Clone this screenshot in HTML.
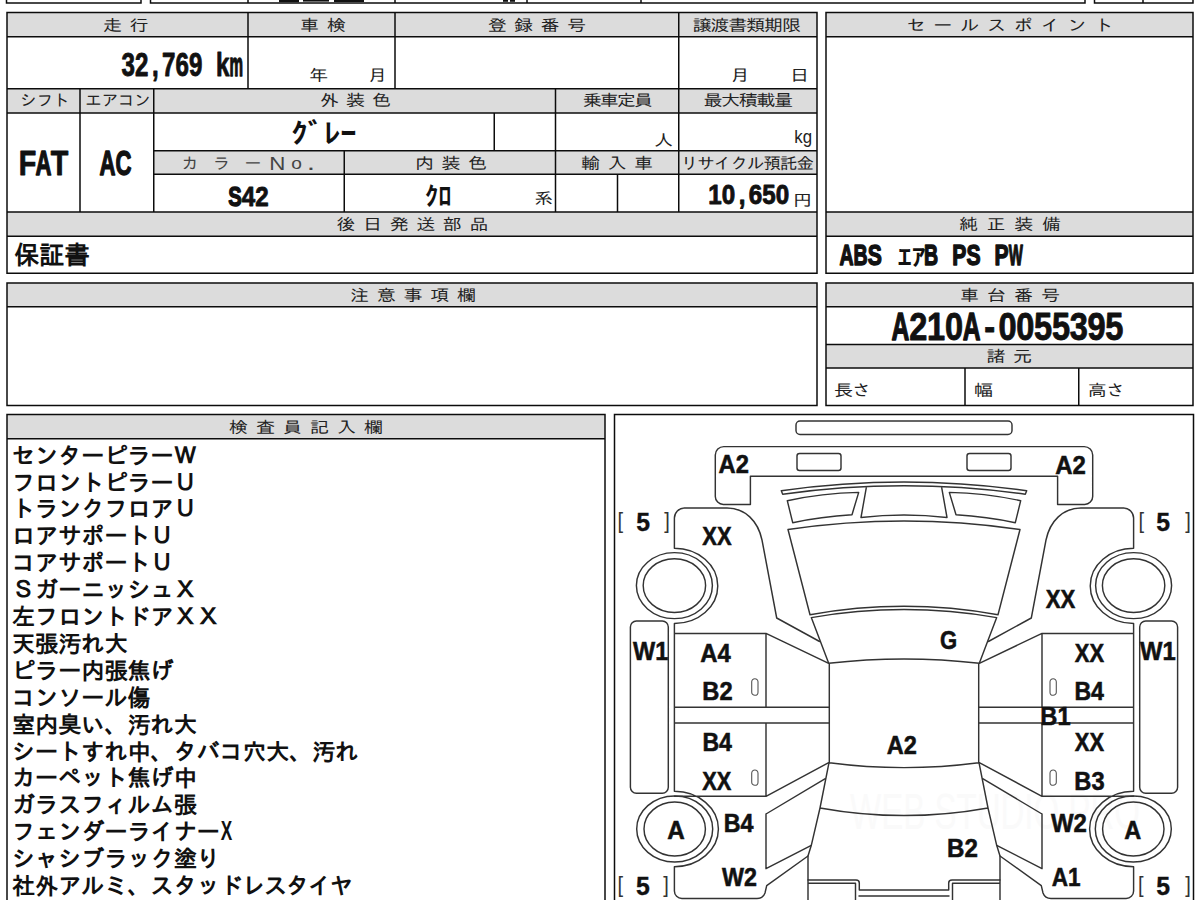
<!DOCTYPE html>
<html lang="ja"><head><meta charset="utf-8"><title>出品票</title>
<style>
html,body{margin:0;padding:0;background:#fff;}
body{width:1200px;height:900px;overflow:hidden;position:relative;font-family:"Liberation Sans","IPAGothic","Noto Sans CJK JP",sans-serif;}
svg{position:absolute;left:0;top:0;display:block}
text{white-space:pre}
</style></head><body>
<svg width="1200" height="900" viewBox="0 0 1200 900">
<g id="fills">
<rect x="7.0" y="12.5" width="810.0" height="24.25" fill="#dcdcdc"/>
<rect x="7.0" y="88.75" width="810.0" height="24.25" fill="#dcdcdc"/>
<rect x="153.75" y="150.75" width="663.25" height="23.5" fill="#dcdcdc"/>
<rect x="7.0" y="212.0" width="810.0" height="24.25" fill="#dcdcdc"/>
<rect x="826.0" y="12.5" width="367.0" height="24.25" fill="#dcdcdc"/>
<rect x="826.0" y="212.0" width="367.0" height="24.25" fill="#dcdcdc"/>
<rect x="7.0" y="283.0" width="810.0" height="23.75" fill="#dcdcdc"/>
<rect x="826.0" y="283.0" width="367.0" height="23.75" fill="#dcdcdc"/>
<rect x="826.0" y="344.5" width="367.0" height="23.5" fill="#dcdcdc"/>
<rect x="7.0" y="414.5" width="598.0" height="24.25" fill="#dcdcdc"/>
</g>
<g id="grid" fill="none" stroke="#0c0c0c" stroke-width="1.5">
<path d="M5.75,3H141.75 M6.5,-2V3 M141,-2V3 M149.75,3H1085.75 M150.5,-2V3 M1085,-2V3 M248,-2V3 M395,-2V3 M527,-2V3 M641,-2V3 M1093.75,3H1193.75 M1094.5,-2V3 M1193,-2V3 M1143,-2V3 M6.25,12.5H817.75 M6.25,36.75H817.75 M6.25,88.75H817.75 M6.25,113.0H817.75 M6.25,212.0H817.75 M6.25,236.25H817.75 M6.25,273.25H817.75 M153.00,150.75H817.75 M153.00,174.25H817.75 M7.0,12.5V273.25 M817.0,12.5V273.25 M248,12.5V88.75 M395,12.5V88.75 M678.75,12.5V212.0 M80,88.75V212.0 M153.75,88.75V212.0 M555.5,88.75V212.0 M494.25,113.0V150.75 M344.25,150.75V212.0 M617.5,174.25V212.0 M825.25,12.5H1193.75 M825.25,36.75H1193.75 M825.25,212.0H1193.75 M825.25,236.25H1193.75 M825.25,273.25H1193.75 M826.0,12.5V273.25 M1193.0,12.5V273.25 M825.25,283.0H1193.75 M825.25,306.75H1193.75 M825.25,344.5H1193.75 M825.25,368.0H1193.75 M825.25,405.5H1193.75 M826.0,283.0V405.5 M1193.0,283.0V405.5 M965,368.0V405.5 M1078.75,368.0V405.5 M6.25,283.0H817.75 M6.25,306.75H817.75 M6.25,405.5H817.75 M7.0,283.0V405.5 M817.0,283.0V405.5 M6.25,414.5H605.75 M6.25,438.75H605.75 M7.0,414.5V905 M605,414.5V905 M613.75,414.5H1194.25 M614.5,414.5V905 M1193.5,414.5V905"/>
</g>
<g id="topcut" fill="#111">
<rect x="279" y="0" width="20" height="2.2"/><rect x="303" y="0" width="26" height="1.6"/><rect x="334" y="0" width="30" height="2"/>
<rect x="503" y="0" width="5" height="1.8"/><rect x="510" y="0" width="5" height="1.8"/><rect x="1100" y="0" width="0" height="0"/>
</g>
<text x="850" y="829" font-family="'Liberation Sans',sans-serif" font-size="50" fill="#fafafa" textLength="290" lengthAdjust="spacingAndGlyphs">WEB STUDIO PRO</text>
<g id="diagram">
<g fill="none" stroke="#333" stroke-width="1.45" stroke-linejoin="round" stroke-linecap="round">
<path d="M800,421H1008A4,4 0 0 1 1012,425V430.5A4,4 0 0 1 1008,434.5H800A4,4 0 0 1 796,430.5V425A4,4 0 0 1 800,421Z M723.8,446.6H1084.2A8.5,8.5 0 0 1 1092.7,455.1V496.4A8,8 0 0 1 1084.7,504.4H1057.6V476.3H750.4V504.4H723.3A8,8 0 0 1 715.3,496.4V455.1A8.5,8.5 0 0 1 723.8,446.6Z M781.3,490.7 Q904.00,473.30 1026.70,490.70 L1025.3,494.2 Q904.00,477.40 782.70,494.20 Z M866.3,487.6 L861,517.5 Q904.00,512.50 947.00,517.50 L941.7,487.6 M788,529.5 Q904.00,512.50 1020.00,529.50 L998,614.7 Q904.00,597.90 810.00,614.70 Z M811.3,617.6 Q904.00,601.60 996.70,617.60 L979.3,663.3 Q904.00,654.70 828.70,663.30 Z M829.3,663.3 V762.7 Q904.00,772.50 978.70,762.70 V663.3 M829.0,762.7 L820,808 Q904.00,823.20 988.00,808.00 L979.0,762.7 M820,808 L811.3,845.3 L808,856 V880 H856 Q859.3,880 859.3,883 V890 H948.7 V883 Q948.7,880 952,880 H1000 V856 L996.7,845.3 L988,808 M859,896 H949"/>
<g><path d="M799.5,453.5H838.5A2.5,2.5 0 0 1 841,456V468A2.5,2.5 0 0 1 838.5,470.5H799.5A2.5,2.5 0 0 1 797,468V456A2.5,2.5 0 0 1 799.5,453.5Z M787.3,500.7 Q822,493.2 858.7,492.4 L852,514.7 Q821,516.5 792.7,522.7 Z M808,883.3 H855.5 V905 M808,880 V905 M674.4,548.3 V518 A10,10 0 0 1 684.4,508 H727 C745,508 758,521 762,540 L776.7,618 L819.6,641.5 M674.4,633.4 H766 L828.7,663.3 M674.4,623.5 V791.3 M766,633.4 V707.2 M766,723 V796.3 M674.4,707.2 H829.3 M674.4,723 H829.3 M674.4,796.3 H766 L828.7,762.7 M766,814 L825.3,778.7 M811.3,845.3 L766,868.7 V814 M674.4,866.7 V891 A7.5,7.5 0 0 0 681.9,898.5 H757 Q763,898.5 765,893 L766.7,885.6 L808,856 M674.4,548.3 A43.4,37.6 0 0 1 674.4,623.5 M674.4,791.3 A44,37.7 0 0 1 674.4,866.7 M636.4,621 H662.3 A6,6 0 0 1 668.3,627 V787.3 A6,6 0 0 1 662.3,793.3 H636.4 A6,6 0 0 1 630.4,787.3 V627 A6,6 0 0 1 636.4,621 Z"/><path stroke="#555" stroke-width="1.1" d="M754.85,678.7 A3.15,3.15 0 0 1 758,681.85 V692.15 A3.15,3.15 0 0 1 751.7,692.15 V681.85 A3.15,3.15 0 0 1 754.85,678.7 Z M754.85,770 A3.15,3.15 0 0 1 758,773.15 V782.15 A3.15,3.15 0 0 1 751.7,782.15 V773.15 A3.15,3.15 0 0 1 754.85,770 Z"/><ellipse cx="674.4" cy="585.6" rx="38" ry="33"/><ellipse cx="674.4" cy="585.6" rx="31.2" ry="26.9"/><ellipse cx="674.7" cy="829" rx="38" ry="33"/><ellipse cx="674.7" cy="829" rx="30.7" ry="27"/></g>
<g transform="translate(1808.0,0) scale(-1,1)"><path d="M799.5,453.5H838.5A2.5,2.5 0 0 1 841,456V468A2.5,2.5 0 0 1 838.5,470.5H799.5A2.5,2.5 0 0 1 797,468V456A2.5,2.5 0 0 1 799.5,453.5Z M787.3,500.7 Q822,493.2 858.7,492.4 L852,514.7 Q821,516.5 792.7,522.7 Z M808,883.3 H855.5 V905 M808,880 V905 M674.4,548.3 V518 A10,10 0 0 1 684.4,508 H727 C745,508 758,521 762,540 L776.7,618 L819.6,641.5 M674.4,633.4 H766 L828.7,663.3 M674.4,623.5 V791.3 M766,633.4 V707.2 M766,723 V796.3 M674.4,707.2 H829.3 M674.4,723 H829.3 M674.4,796.3 H766 L828.7,762.7 M766,814 L825.3,778.7 M811.3,845.3 L766,868.7 V814 M674.4,866.7 V891 A7.5,7.5 0 0 0 681.9,898.5 H757 Q763,898.5 765,893 L766.7,885.6 L808,856 M674.4,548.3 A43.4,37.6 0 0 1 674.4,623.5 M674.4,791.3 A44,37.7 0 0 1 674.4,866.7 M636.4,621 H662.3 A6,6 0 0 1 668.3,627 V787.3 A6,6 0 0 1 662.3,793.3 H636.4 A6,6 0 0 1 630.4,787.3 V627 A6,6 0 0 1 636.4,621 Z"/><path stroke="#555" stroke-width="1.1" d="M754.85,678.7 A3.15,3.15 0 0 1 758,681.85 V692.15 A3.15,3.15 0 0 1 751.7,692.15 V681.85 A3.15,3.15 0 0 1 754.85,678.7 Z M754.85,770 A3.15,3.15 0 0 1 758,773.15 V782.15 A3.15,3.15 0 0 1 751.7,782.15 V773.15 A3.15,3.15 0 0 1 754.85,770 Z"/><ellipse cx="674.4" cy="585.6" rx="38" ry="33"/><ellipse cx="674.4" cy="585.6" rx="31.2" ry="26.9"/><ellipse cx="674.7" cy="829" rx="38" ry="33"/><ellipse cx="674.7" cy="829" rx="30.7" ry="27"/></g>
</g>
</g>
<g id="texts">
<text transform="translate(0,30.60) scale(1.1938,1)" x="86.24 108.43" font-family="'Liberation Sans', 'IPAGothic', 'Noto Sans CJK JP', sans-serif" font-weight="400" font-size="16.0" fill="#222">走行</text>
<text transform="translate(0,30.60) scale(1.1938,1)" x="251.25 273.87" font-family="'Liberation Sans', 'IPAGothic', 'Noto Sans CJK JP', sans-serif" font-weight="400" font-size="16.0" fill="#222">車検</text>
<text transform="translate(0,30.60) scale(1.1938,1)" x="408.52 430.65 452.78 474.90" font-family="'Liberation Sans', 'IPAGothic', 'Noto Sans CJK JP', sans-serif" font-weight="400" font-size="16.0" fill="#222">登録番号</text>
<text transform="translate(0,30.60) scale(1.1938,1)" x="580.24 595.19 610.14 625.09 640.05 655.00" font-family="'Liberation Sans', 'IPAGothic', 'Noto Sans CJK JP', sans-serif" font-weight="400" font-size="16.0" fill="#222">譲渡書類期限</text>
<text transform="translate(0,30.60) scale(1.1938,1)" x="759.28 781.78 804.28 826.78 849.27 871.77 894.27 916.76" font-family="'Liberation Sans', 'IPAGothic', 'Noto Sans CJK JP', sans-serif" font-weight="400" font-size="16.0" fill="#222">セールスポイント</text>
<text transform="translate(0,106.40) scale(1.0534,1)" x="19.06 34.72 50.38" font-family="'Liberation Sans', 'IPAGothic', 'Noto Sans CJK JP', sans-serif" font-weight="400" font-size="16.0" fill="#222">シフト</text>
<text transform="translate(0,106.40) scale(1.0534,1)" x="80.76 96.27 111.77 127.28" font-family="'Liberation Sans', 'IPAGothic', 'Noto Sans CJK JP', sans-serif" font-weight="400" font-size="16.0" fill="#222">エアコン</text>
<text transform="translate(0,106.40) scale(1.1938,1)" x="268.00 289.78 311.56" font-family="'Liberation Sans', 'IPAGothic', 'Noto Sans CJK JP', sans-serif" font-weight="400" font-size="16.0" fill="#222">外装色</text>
<text transform="translate(0,106.40) scale(1.1938,1)" x="488.10 502.41 516.72 531.03" font-family="'Liberation Sans', 'IPAGothic', 'Noto Sans CJK JP', sans-serif" font-weight="400" font-size="16.0" fill="#222">乗車定員</text>
<text transform="translate(0,106.40) scale(1.1938,1)" x="589.24 604.01 618.77 633.53 648.30" font-family="'Liberation Sans', 'IPAGothic', 'Noto Sans CJK JP', sans-serif" font-weight="400" font-size="16.0" fill="#222">最大積載量</text>
<text transform="translate(0,168.50) scale(1.0534,1)" x="172.37 202.28 232.18" font-family="'Liberation Sans', 'IPAGothic', 'Noto Sans CJK JP', sans-serif" font-weight="400" font-size="16.0" fill="#444">カラー</text>
<text transform="translate(0,168.50) scale(1.1938,1)" x="347.58 369.78 391.98" font-family="'Liberation Sans', 'IPAGothic', 'Noto Sans CJK JP', sans-serif" font-weight="400" font-size="16.0" fill="#222">内装色</text>
<text transform="translate(0,168.50) scale(1.1938,1)" x="486.63 508.83 531.03" font-family="'Liberation Sans', 'IPAGothic', 'Noto Sans CJK JP', sans-serif" font-weight="400" font-size="16.0" fill="#222">輸入車</text>
<text transform="translate(0,168.50) scale(1.0885,1)" x="625.45 640.64 655.83 671.02 686.22 701.41 716.60 731.79" font-family="'Liberation Sans', 'IPAGothic', 'Noto Sans CJK JP', sans-serif" font-weight="400" font-size="16.0" fill="#222">リサイクル預託金</text>
<text transform="translate(0,230.00) scale(1.1938,1)" x="281.83 304.11 326.39 348.67 370.95 393.23" font-family="'Liberation Sans', 'IPAGothic', 'Noto Sans CJK JP', sans-serif" font-weight="400" font-size="16.0" fill="#222">後日発送部品</text>
<text transform="translate(0,301.00) scale(1.1938,1)" x="293.13 315.54 337.95 360.36 382.76" font-family="'Liberation Sans', 'IPAGothic', 'Noto Sans CJK JP', sans-serif" font-weight="400" font-size="16.0" fill="#222">注意事項欄</text>
<text transform="translate(0,432.50) scale(1.1938,1)" x="191.78 214.40 237.01 259.63 282.24 304.86" font-family="'Liberation Sans', 'IPAGothic', 'Noto Sans CJK JP', sans-serif" font-weight="400" font-size="16.0" fill="#222">検査員記入欄</text>
<text transform="translate(0,230.00) scale(1.1938,1)" x="803.26 826.44 849.61 872.79" font-family="'Liberation Sans', 'IPAGothic', 'Noto Sans CJK JP', sans-serif" font-weight="400" font-size="16.0" fill="#222">純正装備</text>
<text transform="translate(0,301.00) scale(1.1938,1)" x="804.10 826.72 849.33 871.95" font-family="'Liberation Sans', 'IPAGothic', 'Noto Sans CJK JP', sans-serif" font-weight="400" font-size="16.0" fill="#222">車台番号</text>
<text transform="translate(0,362.00) scale(1.1938,1)" x="826.30 848.49" font-family="'Liberation Sans', 'IPAGothic', 'Noto Sans CJK JP', sans-serif" font-weight="400" font-size="16.0" fill="#222">諸元</text>
<text transform="translate(0,396.00) scale(1.1938,1)" x="698.56 713.63" font-family="'Liberation Sans', 'IPAGothic', 'Noto Sans CJK JP', sans-serif" font-weight="400" font-size="16.0" fill="#222">長さ</text>
<text transform="translate(0,396.00) scale(1.1938,1)" x="815.83" font-family="'Liberation Sans', 'IPAGothic', 'Noto Sans CJK JP', sans-serif" font-weight="400" font-size="16.0" fill="#222">幅</text>
<text transform="translate(0,396.00) scale(1.1938,1)" x="911.11 926.40" font-family="'Liberation Sans', 'IPAGothic', 'Noto Sans CJK JP', sans-serif" font-weight="400" font-size="16.0" fill="#222">高さ</text>
<text transform="translate(0,80.50) scale(1.1938,1)" x="258.79" font-family="'Liberation Sans', 'IPAGothic', 'Noto Sans CJK JP', sans-serif" font-weight="400" font-size="16.0" fill="#222">年</text>
<text transform="translate(0,80.50) scale(1.1938,1)" x="308.21" font-family="'Liberation Sans', 'IPAGothic', 'Noto Sans CJK JP', sans-serif" font-weight="400" font-size="16.0" fill="#222">月</text>
<text transform="translate(0,80.50) scale(1.1938,1)" x="611.86" font-family="'Liberation Sans', 'IPAGothic', 'Noto Sans CJK JP', sans-serif" font-weight="400" font-size="16.0" fill="#222">月</text>
<text transform="translate(0,80.50) scale(1.1938,1)" x="661.70" font-family="'Liberation Sans', 'IPAGothic', 'Noto Sans CJK JP', sans-serif" font-weight="400" font-size="16.0" fill="#222">日</text>
<text transform="translate(0,145.50) scale(1.1938,1)" x="547.78" font-family="'Liberation Sans', 'IPAGothic', 'Noto Sans CJK JP', sans-serif" font-weight="400" font-size="16.0" fill="#222">人</text>
<text transform="translate(0,204.00) scale(1.1938,1)" x="447.26" font-family="'Liberation Sans', 'IPAGothic', 'Noto Sans CJK JP', sans-serif" font-weight="400" font-size="16.0" fill="#222">系</text>
<text transform="translate(0,205.50) scale(1.1938,1)" x="664.21" font-family="'Liberation Sans', 'IPAGothic', 'Noto Sans CJK JP', sans-serif" font-weight="400" font-size="16.0" fill="#222">円</text>
<text transform="translate(269.21,169.50) scale(1.1848,1)" font-family="'Liberation Sans', 'IPAGothic', 'Noto Sans CJK JP', sans-serif" font-weight="400" font-size="18.84" fill="#444" >N</text>
<text transform="translate(291.23,169.34) scale(1.1702,1)" font-family="'Liberation Sans', 'IPAGothic', 'Noto Sans CJK JP', sans-serif" font-weight="400" font-size="16.36" fill="#444" >o</text>
<text transform="translate(306.80,169.50) scale(1.3200,1)" font-family="'Liberation Sans', 'IPAGothic', 'Noto Sans CJK JP', sans-serif" font-weight="400" font-size="22.73" fill="#444" >.</text>
<text transform="translate(794.32,143.48) scale(0.8798,1)" font-family="'Liberation Sans', sans-serif" font-weight="400" font-size="19.15" fill="#222" >kg</text>
<text transform="translate(0,75.92) scale(0.7213,1)" x="168.50 187.22 210.59 224.65 243.37 262.09 285.46 299.52" font-family="'Liberation Sans', sans-serif" font-weight="700" font-size="33.45" fill="#111" stroke="#111" stroke-width="0.9" stroke-linejoin="round">32,769 k</text>
<text transform="translate(229.50,75.92) scale(0.4539,1)" font-family="'Liberation Sans', sans-serif" font-weight="700" font-size="33.45" fill="#111" stroke="#111" stroke-width="1.44" stroke-linejoin="round">m</text>
<text transform="translate(0,174.65) scale(0.8324,1)" x="22.50 47.47 60.94" font-family="'Liberation Sans', sans-serif" font-weight="700" font-size="34.51" fill="#111" stroke="#111" stroke-width="0.9" stroke-linejoin="round">F T</text>
<text transform="translate(35.50,174.65) scale(0.6421,1)" font-family="'Liberation Sans', sans-serif" font-weight="700" font-size="34.51" fill="#111" stroke="#111" stroke-width="1.44" stroke-linejoin="round">A</text>
<text transform="translate(99.50,174.65) scale(0.6421,1)" font-family="'Liberation Sans', sans-serif" font-weight="700" font-size="34.51" fill="#111" stroke="#111" stroke-width="1.44" stroke-linejoin="round">A</text>
<text transform="translate(115.50,174.65) scale(0.6421,1)" font-family="'Liberation Sans', sans-serif" font-weight="700" font-size="34.51" fill="#111" stroke="#111" stroke-width="1.44" stroke-linejoin="round">C</text>
<text transform="translate(0,205.72) scale(0.8565,1)" x="270.51 282.35 298.11" font-family="'Liberation Sans', sans-serif" font-weight="700" font-size="28.17" fill="#111" stroke="#111" stroke-width="0.9" stroke-linejoin="round"> 42</text>
<text transform="translate(228.30,205.72) scale(0.7185,1)" font-family="'Liberation Sans', sans-serif" font-weight="700" font-size="28.17" fill="#111" stroke="#111" stroke-width="1.44" stroke-linejoin="round">S</text>
<text transform="translate(0,203.73) scale(0.9016,1)" x="785.64 800.61 819.31 830.56 845.53 860.50" font-family="'Liberation Sans', sans-serif" font-weight="700" font-size="26.76" fill="#111" stroke="#111" stroke-width="0.9" stroke-linejoin="round">10,650</text>
<text transform="translate(0,339.61) scale(0.8405,1)" x="1065.95 1081.77 1102.99 1124.20 1150.81 1170.95 1187.85 1209.06 1230.28 1251.49 1272.70 1293.92 1315.13" font-family="'Liberation Sans', sans-serif" font-weight="700" font-size="38.73" fill="#111" stroke="#111" stroke-width="0.9" stroke-linejoin="round"> 210 -0055395</text>
<text transform="translate(891.50,339.61) scale(0.6374,1)" font-family="'Liberation Sans', sans-serif" font-weight="700" font-size="38.73" fill="#111" stroke="#111" stroke-width="1.44" stroke-linejoin="round">A</text>
<text transform="translate(962.82,339.61) scale(0.6374,1)" font-family="'Liberation Sans', sans-serif" font-weight="700" font-size="38.73" fill="#111" stroke="#111" stroke-width="1.44" stroke-linejoin="round">A</text>
<text transform="translate(839.50,264.71) scale(0.6762,1)" font-family="'Liberation Sans', sans-serif" font-weight="700" font-size="28.87" fill="#111" stroke="#111" stroke-width="1.44" stroke-linejoin="round">A</text>
<text transform="translate(853.60,264.71) scale(0.6762,1)" font-family="'Liberation Sans', sans-serif" font-weight="700" font-size="28.87" fill="#111" stroke="#111" stroke-width="1.44" stroke-linejoin="round">B</text>
<text transform="translate(867.70,264.71) scale(0.7321,1)" font-family="'Liberation Sans', sans-serif" font-weight="700" font-size="28.87" fill="#111" stroke="#111" stroke-width="1.44" stroke-linejoin="round">S</text>
<text transform="translate(897.66,264.65) scale(1.2433,1)" font-family="'Liberation Sans', 'Noto Sans CJK JP', sans-serif" font-weight="700" font-size="22.44" fill="#111" >ｴｱ</text>
<text transform="translate(924.10,264.71) scale(0.6762,1)" font-family="'Liberation Sans', sans-serif" font-weight="700" font-size="28.87" fill="#111" stroke="#111" stroke-width="1.44" stroke-linejoin="round">B</text>
<text transform="translate(952.30,264.71) scale(0.7321,1)" font-family="'Liberation Sans', sans-serif" font-weight="700" font-size="28.87" fill="#111" stroke="#111" stroke-width="1.44" stroke-linejoin="round">P</text>
<text transform="translate(966.40,264.71) scale(0.7321,1)" font-family="'Liberation Sans', sans-serif" font-weight="700" font-size="28.87" fill="#111" stroke="#111" stroke-width="1.44" stroke-linejoin="round">S</text>
<text transform="translate(994.60,264.71) scale(0.7321,1)" font-family="'Liberation Sans', sans-serif" font-weight="700" font-size="28.87" fill="#111" stroke="#111" stroke-width="1.44" stroke-linejoin="round">P</text>
<text transform="translate(1008.70,264.71) scale(0.5174,1)" font-family="'Liberation Sans', sans-serif" font-weight="700" font-size="28.87" fill="#111" stroke="#111" stroke-width="1.44" stroke-linejoin="round">W</text>
<text transform="translate(291.19,143.37) scale(1.2042,1)" font-family="'Liberation Sans', 'Noto Sans CJK JP', sans-serif" font-weight="700" font-size="27.17" fill="#111" >ｸﾞﾚｰ</text>
<text transform="translate(424.93,204.50) scale(1.0667,1)" font-family="'Liberation Sans', 'Noto Sans CJK JP', sans-serif" font-weight="700" font-size="25.00" fill="#111" >ｸﾛ</text>
<text transform="translate(14.24,263.98) scale(0.9961,1)" font-family="'Liberation Sans', 'IPAGothic', 'Noto Sans CJK JP', sans-serif" font-weight="700" font-size="25.27" fill="#111" >保証書</text>
<text x="12" y="463.60" font-family="'Liberation Sans', 'IPAGothic', 'Noto Sans CJK JP', sans-serif" font-weight="700" font-size="23.1" fill="#111">センターピラーＷ</text>
<text x="12" y="490.50" font-family="'Liberation Sans', 'IPAGothic', 'Noto Sans CJK JP', sans-serif" font-weight="700" font-size="23.1" fill="#111">フロントピラーＵ</text>
<text x="12" y="517.40" font-family="'Liberation Sans', 'IPAGothic', 'Noto Sans CJK JP', sans-serif" font-weight="700" font-size="23.1" fill="#111">トランクフロアＵ</text>
<text x="12" y="544.30" font-family="'Liberation Sans', 'IPAGothic', 'Noto Sans CJK JP', sans-serif" font-weight="700" font-size="23.1" fill="#111">ロアサポートＵ</text>
<text x="12" y="571.20" font-family="'Liberation Sans', 'IPAGothic', 'Noto Sans CJK JP', sans-serif" font-weight="700" font-size="23.1" fill="#111">コアサポートＵ</text>
<text x="12" y="598.10" font-family="'Liberation Sans', 'IPAGothic', 'Noto Sans CJK JP', sans-serif" font-weight="700" font-size="23.1" fill="#111">ＳガーニッシュＸ</text>
<text x="12" y="625.00" font-family="'Liberation Sans', 'IPAGothic', 'Noto Sans CJK JP', sans-serif" font-weight="700" font-size="23.1" fill="#111">左フロントドアＸＸ</text>
<text x="12" y="651.90" font-family="'Liberation Sans', 'IPAGothic', 'Noto Sans CJK JP', sans-serif" font-weight="700" font-size="23.1" fill="#111">天張汚れ大</text>
<text x="12" y="678.80" font-family="'Liberation Sans', 'IPAGothic', 'Noto Sans CJK JP', sans-serif" font-weight="700" font-size="23.1" fill="#111">ピラー内張焦げ</text>
<text x="12" y="705.70" font-family="'Liberation Sans', 'IPAGothic', 'Noto Sans CJK JP', sans-serif" font-weight="700" font-size="23.1" fill="#111">コンソール傷</text>
<text x="12" y="732.60" font-family="'Liberation Sans', 'IPAGothic', 'Noto Sans CJK JP', sans-serif" font-weight="700" font-size="23.1" fill="#111">室内臭い、汚れ大</text>
<text x="12" y="759.50" font-family="'Liberation Sans', 'IPAGothic', 'Noto Sans CJK JP', sans-serif" font-weight="700" font-size="23.1" fill="#111">シートすれ中、タバコ穴大、汚れ</text>
<text x="12" y="786.40" font-family="'Liberation Sans', 'IPAGothic', 'Noto Sans CJK JP', sans-serif" font-weight="700" font-size="23.1" fill="#111">カーペット焦げ中</text>
<text x="12" y="813.30" font-family="'Liberation Sans', 'IPAGothic', 'Noto Sans CJK JP', sans-serif" font-weight="700" font-size="23.1" fill="#111">ガラスフィルム張</text>
<text x="12" y="840.20" font-family="'Liberation Sans', 'IPAGothic', 'Noto Sans CJK JP', sans-serif" font-weight="700" font-size="23.1" fill="#111">フェンダーライナー</text>
<text x="12" y="867.10" font-family="'Liberation Sans', 'IPAGothic', 'Noto Sans CJK JP', sans-serif" font-weight="700" font-size="23.1" fill="#111">シャシブラック塗り</text>
<text x="12.0 35.1 58.2 81.3 104.4 127.5 150.6 173.7 196.8 219.9 241.9 263.9 285.9 307.9 329.9" y="894.00" font-family="'Liberation Sans', 'IPAGothic', 'Noto Sans CJK JP', sans-serif" font-weight="700" font-size="23.1" fill="#111">社外アルミ、スタッドレスタイヤ</text>
<text transform="translate(220.83,840.20) scale(0.6242,1)" font-family="'Liberation Sans', sans-serif" font-weight="700" font-size="27.54" fill="#111" >X</text>
<text transform="translate(718.59,473.30) scale(0.9224,1)" font-family="'Liberation Sans', 'NanumGothic', sans-serif" font-weight="700" font-size="25.71" fill="#111" stroke="#111" stroke-width="0.55">A2</text>
<text transform="translate(1055.28,473.60) scale(0.9320,1)" font-family="'Liberation Sans', 'NanumGothic', sans-serif" font-weight="700" font-size="25.71" fill="#111" stroke="#111" stroke-width="0.55">A2</text>
<text transform="translate(702.28,545.30) scale(0.8507,1)" font-family="'Liberation Sans', 'NanumGothic', sans-serif" font-weight="700" font-size="25.80" fill="#111" stroke="#111" stroke-width="0.55">XX</text>
<text transform="translate(1045.78,607.80) scale(0.8581,1)" font-family="'Liberation Sans', 'NanumGothic', sans-serif" font-weight="700" font-size="25.80" fill="#111" stroke="#111" stroke-width="0.55">XX</text>
<text transform="translate(633.00,660.00) scale(0.8997,1)" font-family="'Liberation Sans', 'NanumGothic', sans-serif" font-weight="700" font-size="26.09" fill="#111" stroke="#111" stroke-width="0.55">W1</text>
<text transform="translate(1140.00,660.00) scale(0.9127,1)" font-family="'Liberation Sans', 'NanumGothic', sans-serif" font-weight="700" font-size="26.09" fill="#111" stroke="#111" stroke-width="0.55">W1</text>
<text transform="translate(700.29,662.30) scale(0.8970,1)" font-family="'Liberation Sans', 'NanumGothic', sans-serif" font-weight="700" font-size="26.52" fill="#111" stroke="#111" stroke-width="0.55">A4</text>
<text transform="translate(702.34,700.00) scale(0.9224,1)" font-family="'Liberation Sans', 'NanumGothic', sans-serif" font-weight="700" font-size="25.71" fill="#111" stroke="#111" stroke-width="0.55">B2</text>
<text transform="translate(702.38,751.00) scale(0.8865,1)" font-family="'Liberation Sans', 'NanumGothic', sans-serif" font-weight="700" font-size="26.09" fill="#111" stroke="#111" stroke-width="0.55">B4</text>
<text transform="translate(702.28,790.00) scale(0.8340,1)" font-family="'Liberation Sans', 'NanumGothic', sans-serif" font-weight="700" font-size="26.09" fill="#111" stroke="#111" stroke-width="0.55">XX</text>
<text transform="translate(1074.78,662.30) scale(0.8275,1)" font-family="'Liberation Sans', 'NanumGothic', sans-serif" font-weight="700" font-size="26.52" fill="#111" stroke="#111" stroke-width="0.55">XX</text>
<text transform="translate(1074.38,700.00) scale(0.8865,1)" font-family="'Liberation Sans', 'NanumGothic', sans-serif" font-weight="700" font-size="26.09" fill="#111" stroke="#111" stroke-width="0.55">B4</text>
<text transform="translate(1040.34,725.30) scale(0.9198,1)" font-family="'Liberation Sans', 'NanumGothic', sans-serif" font-weight="700" font-size="25.80" fill="#111" stroke="#111" stroke-width="0.55">B1</text>
<text transform="translate(1074.78,751.00) scale(0.8413,1)" font-family="'Liberation Sans', 'NanumGothic', sans-serif" font-weight="700" font-size="26.09" fill="#111" stroke="#111" stroke-width="0.55">XX</text>
<text transform="translate(1074.34,789.75) scale(0.9355,1)" font-family="'Liberation Sans', 'NanumGothic', sans-serif" font-weight="700" font-size="25.35" fill="#111" stroke="#111" stroke-width="0.55">B3</text>
<text transform="translate(940.12,649.24) scale(0.8466,1)" font-family="'Liberation Sans', 'NanumGothic', sans-serif" font-weight="700" font-size="26.06" fill="#111" stroke="#111" stroke-width="0.55">G</text>
<text transform="translate(886.79,754.00) scale(0.9160,1)" font-family="'Liberation Sans', 'NanumGothic', sans-serif" font-weight="700" font-size="25.71" fill="#111" stroke="#111" stroke-width="0.55">A2</text>
<text transform="translate(947.06,857.00) scale(0.9390,1)" font-family="'Liberation Sans', 'NanumGothic', sans-serif" font-weight="700" font-size="25.71" fill="#111" stroke="#111" stroke-width="0.55">B2</text>
<text transform="translate(667.27,839.26) scale(0.9158,1)" font-family="'Liberation Sans', 'NanumGothic', sans-serif" font-weight="700" font-size="26.47" fill="#111" stroke="#111" stroke-width="0.55">A</text>
<text transform="translate(1124.30,839.26) scale(0.8872,1)" font-family="'Liberation Sans', 'NanumGothic', sans-serif" font-weight="700" font-size="26.47" fill="#111" stroke="#111" stroke-width="0.55">A</text>
<text transform="translate(723.67,831.80) scale(0.9045,1)" font-family="'Liberation Sans', 'NanumGothic', sans-serif" font-weight="700" font-size="25.80" fill="#111" stroke="#111" stroke-width="0.55">B4</text>
<text transform="translate(722.00,885.60) scale(0.9056,1)" font-family="'Liberation Sans', 'NanumGothic', sans-serif" font-weight="700" font-size="25.71" fill="#111" stroke="#111" stroke-width="0.55">W2</text>
<text transform="translate(1051.00,832.00) scale(0.9323,1)" font-family="'Liberation Sans', 'NanumGothic', sans-serif" font-weight="700" font-size="25.71" fill="#111" stroke="#111" stroke-width="0.55">W2</text>
<text transform="translate(1051.82,885.60) scale(0.8641,1)" font-family="'Liberation Sans', 'NanumGothic', sans-serif" font-weight="700" font-size="26.09" fill="#111" stroke="#111" stroke-width="0.55">A1</text>
<text transform="translate(617.60,528.31) scale(0.8952,1)" font-family="'Liberation Sans', 'NanumGothic', sans-serif" font-weight="400" font-size="22.34" fill="#333" >[</text>
<text transform="translate(636.16,531.04) scale(0.9644,1)" font-family="'Liberation Sans', 'NanumGothic', sans-serif" font-weight="700" font-size="25.71" fill="#111" stroke="#111" stroke-width="0.4">5</text>
<text transform="translate(664.30,528.31) scale(0.8952,1)" font-family="'Liberation Sans', 'NanumGothic', sans-serif" font-weight="400" font-size="22.34" fill="#333" >]</text>
<text transform="translate(1138.60,528.31) scale(0.8952,1)" font-family="'Liberation Sans', 'NanumGothic', sans-serif" font-weight="400" font-size="22.34" fill="#333" >[</text>
<text transform="translate(1156.16,531.04) scale(0.9644,1)" font-family="'Liberation Sans', 'NanumGothic', sans-serif" font-weight="700" font-size="25.71" fill="#111" stroke="#111" stroke-width="0.4">5</text>
<text transform="translate(1185.30,528.31) scale(0.8952,1)" font-family="'Liberation Sans', 'NanumGothic', sans-serif" font-weight="400" font-size="22.34" fill="#333" >]</text>
<text transform="translate(617.60,892.31) scale(0.8952,1)" font-family="'Liberation Sans', 'NanumGothic', sans-serif" font-weight="400" font-size="22.34" fill="#333" >[</text>
<text transform="translate(635.96,895.04) scale(0.9644,1)" font-family="'Liberation Sans', 'NanumGothic', sans-serif" font-weight="700" font-size="25.71" fill="#111" stroke="#111" stroke-width="0.4">5</text>
<text transform="translate(663.30,892.31) scale(0.8952,1)" font-family="'Liberation Sans', 'NanumGothic', sans-serif" font-weight="400" font-size="22.34" fill="#333" >]</text>
<text transform="translate(1138.10,892.31) scale(0.8952,1)" font-family="'Liberation Sans', 'NanumGothic', sans-serif" font-weight="400" font-size="22.34" fill="#333" >[</text>
<text transform="translate(1156.16,895.04) scale(0.9644,1)" font-family="'Liberation Sans', 'NanumGothic', sans-serif" font-weight="700" font-size="25.71" fill="#111" stroke="#111" stroke-width="0.4">5</text>
<text transform="translate(1185.30,892.31) scale(0.8952,1)" font-family="'Liberation Sans', 'NanumGothic', sans-serif" font-weight="400" font-size="22.34" fill="#333" >]</text>
</g>
</svg>
</body></html>
